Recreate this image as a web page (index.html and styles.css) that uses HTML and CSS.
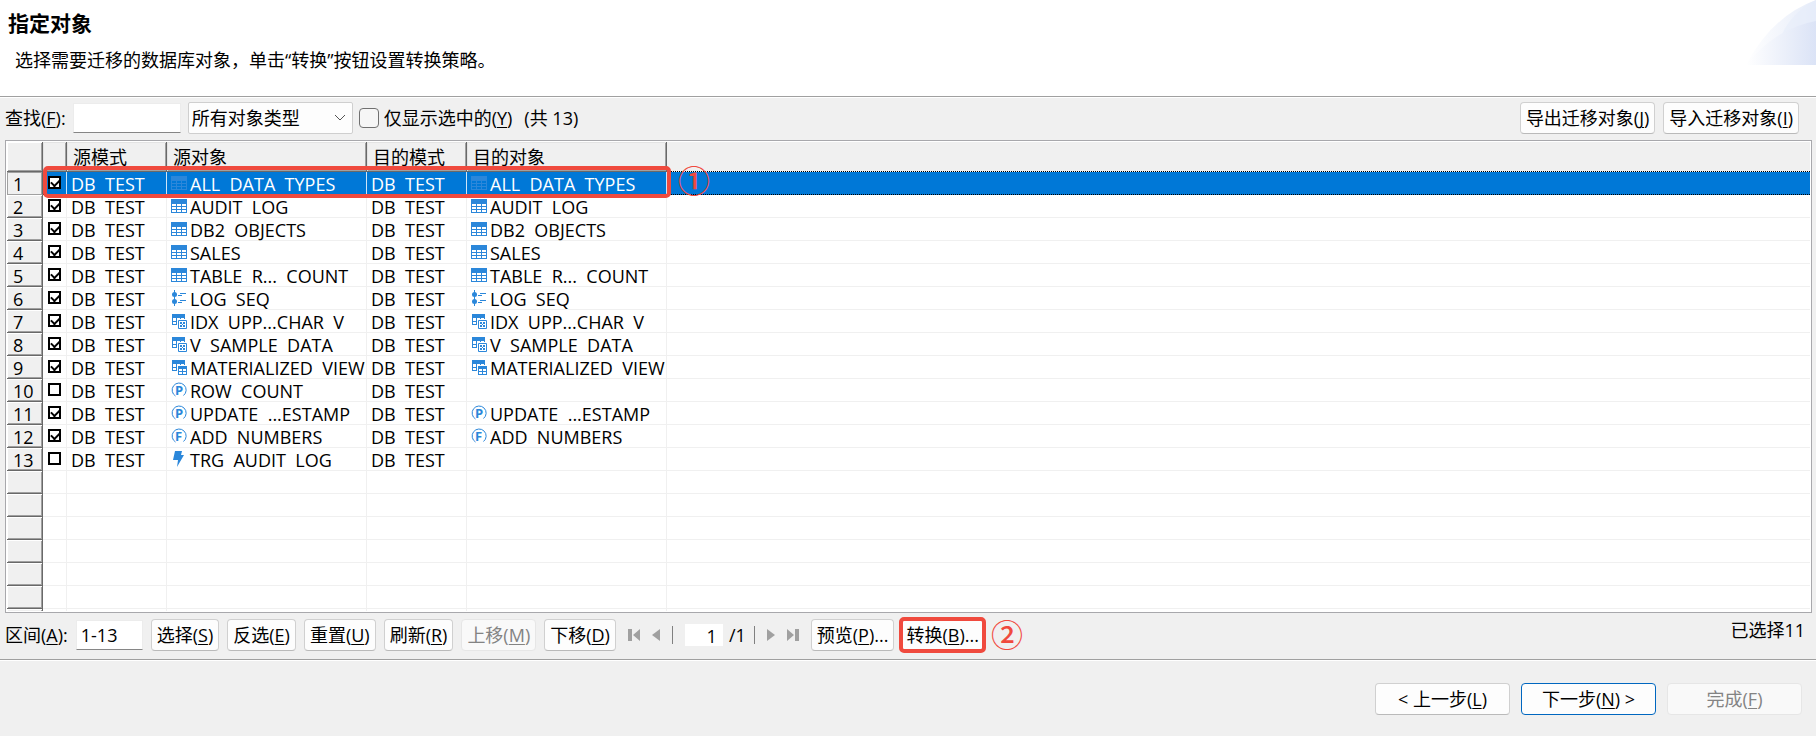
FILE: index.html
```html
<!DOCTYPE html>
<html lang="zh-CN">
<head>
    <meta charset="UTF-8">
    <meta name="viewport" content="width=device-width, initial-scale=1.0">
    <title>指定对象</title>
    <link rel="stylesheet" href="styles.css">
</head>
<body>
    <!-- icon shapes shared by the rows -->
    <svg class="sprite" width="0" height="0" aria-hidden="true">
        <symbol id="i-table" viewBox="0 0 16 16">
            <path fill="#2b87da" fill-rule="evenodd" d="M0 1h16v14H0zM1 6v2h4V6zM6 6v2h4V6zM11 6v2h4V6zM1 9v2h4V9zM6 9v2h4V9zM11 9v2h4V9zM1 12v2h4v-2zM6 12v2h4v-2zM11 12v2h4v-2z"/>
        </symbol>
        <symbol id="i-seq" viewBox="0 0 16 16">
            <path stroke="#2b87da" d="M3.500 0v16M9 3.500h6M7 5.500h4M9 10.500h6M7 12.500h4" fill="none"/>
            <circle cx="3.500" cy="4.500" r="2.500" fill="#2b87da"/>
            <circle cx="3.500" cy="11.500" r="2.500" fill="#2b87da"/>
        </symbol>
        <symbol id="i-view" viewBox="0 0 16 16">
            <path fill="#2b87da" fill-rule="evenodd" d="M1 1h13v11H1zM2 5v3h3V5zM6 5v3h3V5zM10 5v3h3V5zM2 9v2h3V9zM6 9v2h3V9z"/>
            <path fill="#fff" d="M6 6h10v10H6z"/>
            <path fill="none" stroke="#2b87da" d="M7.500 7.500h8v8h-8z"/>
            <path fill="#2b87da" d="M9 9h2v2H9zM12 9h2v2h-2zM9 12h2v2H9zM12 12h2v2h-2zM11 11h1v1h-1z"/>
        </symbol>
        <symbol id="i-mview" viewBox="0 0 16 16">
            <path fill="#2b87da" fill-rule="evenodd" d="M1 1h13v11H1zM2 5v3h3V5zM6 5v3h3V5zM10 5v3h3V5zM2 9v2h3V9zM6 9v2h3V9z"/>
            <path fill="#fff" d="M6 6h10v10H6z"/>
            <path fill="#2b87da" fill-rule="evenodd" d="M7 7h9v9H7zM8 10v2h3v-2zM12 10v2h3v-2zM8 13v2h3v-2zM12 13v2h3v-2z"/>
        </symbol>
        <symbol id="i-proc" viewBox="0 0 16 16">
            <path fill="none" stroke="#2b87da" d="M4.500 14A7 7 0 1 1 12.500 13.500"/>
            <text x="4" y="13" class="glyph">P</text>
        </symbol>
        <symbol id="i-func" viewBox="0 0 16 16">
            <path fill="none" stroke="#2b87da" d="M4.500 14A7 7 0 1 1 12.500 13.500"/>
            <text x="4" y="13" class="glyph">F</text>
        </symbol>
        <symbol id="i-trig" viewBox="0 0 16 16">
            <path fill="#2b87da" d="M4 0h7l-1 4h3L6 16l1-7H2z"/>
        </symbol>
    </svg>

    <header class="banner">
        <h1>指定对象</h1>
        <p>选择需要迁移的数据库对象，单击“转换”按钮设置转换策略。</p>
        <svg class="banner-art" width="70" height="65" viewBox="0 0 70 65" aria-hidden="true">
            <defs>
                <linearGradient id="fadeA"><stop offset="0" stop-color="#fff"/><stop offset="1" stop-color="#e6ecf9"/></linearGradient>
                <linearGradient id="fadeB"><stop offset="0" stop-color="#fff"/><stop offset="1" stop-color="#dbe3f6"/></linearGradient>
            </defs>
            <path fill="url(#fadeA)" d="M0 65Q26 16 70 0V65z"/>
            <path fill="#e6edfa" fill-opacity=".6" d="M36 34Q48 10 70 0V22Q52 25 36 34z"/>
            <path fill="url(#fadeB)" d="M0 65Q30 28 70 21V65z"/>
        </svg>
    </header>

    <main class="content">
        <div class="toolbar">
            <label for="find">查找(<u>F</u>):</label>
            <input type="text" id="find" class="field find">
            <span class="select-wrap">
                <select id="type" aria-label="对象类型">
                    <option>所有对象类型</option>
                </select>
                <svg class="chevron" width="12" height="8" viewBox="0 0 12 8" aria-hidden="true"><path d="M1 1l5 5 5-5" fill="none" stroke="#555"/></svg>
            </span>
            <input type="checkbox" id="only" class="check">
            <label for="only" class="only">仅显示选中的(<u>Y</u>)</label>
            <span>(共 13)</span>
            <span class="spacer"></span>
            <button type="button">导出迁移对象(<u>J</u>)</button>
            <button type="button" class="last">导入迁移对象(<u>I</u>)</button>
        </div>

        <div class="grid">
            <div class="grid-clip">
            <table>
                <colgroup>
                    <col class="c-num"><col class="c-tick"><col class="c-schema"><col class="c-object"><col class="c-schema"><col class="c-object"><col>
                </colgroup>
                <thead>
                    <tr><th class="num"></th><th></th><th>源模式</th><th>源对象</th><th>目的模式</th><th>目的对象</th><th class="rest"></th></tr>
                </thead>
                <tbody>
                    <tr class="selected">
                        <th class="num"><div class="cell">1</div></th>
                        <td><input type="checkbox" class="tick" aria-label="1" checked></td>
                        <td><div class="cell">DB  TEST</div></td>
                        <td><div class="cell"><svg class="icon"><use href="#i-table"/></svg>ALL  DATA  TYPES</div></td>
                        <td><div class="cell">DB  TEST</div></td>
                        <td><div class="cell"><svg class="icon"><use href="#i-table"/></svg>ALL  DATA  TYPES</div></td>
                        <td></td>
                    </tr>
                    <tr>
                        <th class="num"><div class="cell">2</div></th>
                        <td><input type="checkbox" class="tick" aria-label="2" checked></td>
                        <td><div class="cell">DB  TEST</div></td>
                        <td><div class="cell"><svg class="icon"><use href="#i-table"/></svg>AUDIT  LOG</div></td>
                        <td><div class="cell">DB  TEST</div></td>
                        <td><div class="cell"><svg class="icon"><use href="#i-table"/></svg>AUDIT  LOG</div></td>
                        <td></td>
                    </tr>
                    <tr>
                        <th class="num"><div class="cell">3</div></th>
                        <td><input type="checkbox" class="tick" aria-label="3" checked></td>
                        <td><div class="cell">DB  TEST</div></td>
                        <td><div class="cell"><svg class="icon"><use href="#i-table"/></svg>DB2  OBJECTS</div></td>
                        <td><div class="cell">DB  TEST</div></td>
                        <td><div class="cell"><svg class="icon"><use href="#i-table"/></svg>DB2  OBJECTS</div></td>
                        <td></td>
                    </tr>
                    <tr>
                        <th class="num"><div class="cell">4</div></th>
                        <td><input type="checkbox" class="tick" aria-label="4" checked></td>
                        <td><div class="cell">DB  TEST</div></td>
                        <td><div class="cell"><svg class="icon"><use href="#i-table"/></svg>SALES</div></td>
                        <td><div class="cell">DB  TEST</div></td>
                        <td><div class="cell"><svg class="icon"><use href="#i-table"/></svg>SALES</div></td>
                        <td></td>
                    </tr>
                    <tr>
                        <th class="num"><div class="cell">5</div></th>
                        <td><input type="checkbox" class="tick" aria-label="5" checked></td>
                        <td><div class="cell">DB  TEST</div></td>
                        <td><div class="cell"><svg class="icon"><use href="#i-table"/></svg>TABLE  R...  COUNT</div></td>
                        <td><div class="cell">DB  TEST</div></td>
                        <td><div class="cell"><svg class="icon"><use href="#i-table"/></svg>TABLE  R...  COUNT</div></td>
                        <td></td>
                    </tr>
                    <tr>
                        <th class="num"><div class="cell">6</div></th>
                        <td><input type="checkbox" class="tick" aria-label="6" checked></td>
                        <td><div class="cell">DB  TEST</div></td>
                        <td><div class="cell"><svg class="icon"><use href="#i-seq"/></svg>LOG  SEQ</div></td>
                        <td><div class="cell">DB  TEST</div></td>
                        <td><div class="cell"><svg class="icon"><use href="#i-seq"/></svg>LOG  SEQ</div></td>
                        <td></td>
                    </tr>
                    <tr>
                        <th class="num"><div class="cell">7</div></th>
                        <td><input type="checkbox" class="tick" aria-label="7" checked></td>
                        <td><div class="cell">DB  TEST</div></td>
                        <td><div class="cell"><svg class="icon"><use href="#i-view"/></svg>IDX  UPP...CHAR  V</div></td>
                        <td><div class="cell">DB  TEST</div></td>
                        <td><div class="cell"><svg class="icon"><use href="#i-view"/></svg>IDX  UPP...CHAR  V</div></td>
                        <td></td>
                    </tr>
                    <tr>
                        <th class="num"><div class="cell">8</div></th>
                        <td><input type="checkbox" class="tick" aria-label="8" checked></td>
                        <td><div class="cell">DB  TEST</div></td>
                        <td><div class="cell"><svg class="icon"><use href="#i-view"/></svg>V  SAMPLE  DATA</div></td>
                        <td><div class="cell">DB  TEST</div></td>
                        <td><div class="cell"><svg class="icon"><use href="#i-view"/></svg>V  SAMPLE  DATA</div></td>
                        <td></td>
                    </tr>
                    <tr>
                        <th class="num"><div class="cell">9</div></th>
                        <td><input type="checkbox" class="tick" aria-label="9" checked></td>
                        <td><div class="cell">DB  TEST</div></td>
                        <td><div class="cell"><svg class="icon"><use href="#i-mview"/></svg>MATERIALIZED  VIEW</div></td>
                        <td><div class="cell">DB  TEST</div></td>
                        <td><div class="cell"><svg class="icon"><use href="#i-mview"/></svg>MATERIALIZED  VIEW</div></td>
                        <td></td>
                    </tr>
                    <tr>
                        <th class="num"><div class="cell">10</div></th>
                        <td><input type="checkbox" class="tick" aria-label="10"></td>
                        <td><div class="cell">DB  TEST</div></td>
                        <td><div class="cell"><svg class="icon"><use href="#i-proc"/></svg>ROW  COUNT</div></td>
                        <td><div class="cell">DB  TEST</div></td>
                        <td></td>
                        <td></td>
                    </tr>
                    <tr>
                        <th class="num"><div class="cell">11</div></th>
                        <td><input type="checkbox" class="tick" aria-label="11" checked></td>
                        <td><div class="cell">DB  TEST</div></td>
                        <td><div class="cell"><svg class="icon"><use href="#i-proc"/></svg>UPDATE  ...ESTAMP</div></td>
                        <td><div class="cell">DB  TEST</div></td>
                        <td><div class="cell"><svg class="icon"><use href="#i-proc"/></svg>UPDATE  ...ESTAMP</div></td>
                        <td></td>
                    </tr>
                    <tr>
                        <th class="num"><div class="cell">12</div></th>
                        <td><input type="checkbox" class="tick" aria-label="12" checked></td>
                        <td><div class="cell">DB  TEST</div></td>
                        <td><div class="cell"><svg class="icon"><use href="#i-func"/></svg>ADD  NUMBERS</div></td>
                        <td><div class="cell">DB  TEST</div></td>
                        <td><div class="cell"><svg class="icon"><use href="#i-func"/></svg>ADD  NUMBERS</div></td>
                        <td></td>
                    </tr>
                    <tr>
                        <th class="num"><div class="cell">13</div></th>
                        <td><input type="checkbox" class="tick" aria-label="13"></td>
                        <td><div class="cell">DB  TEST</div></td>
                        <td><div class="cell"><svg class="icon"><use href="#i-trig"/></svg>TRG  AUDIT  LOG</div></td>
                        <td><div class="cell">DB  TEST</div></td>
                        <td></td>
                        <td></td>
                    </tr>
                    <!-- empty rows down to the bottom edge -->
                    <tr><th class="num"></th><td></td><td></td><td></td><td></td><td></td><td></td></tr>
                    <tr><th class="num"></th><td></td><td></td><td></td><td></td><td></td><td></td></tr>
                    <tr><th class="num"></th><td></td><td></td><td></td><td></td><td></td><td></td></tr>
                    <tr><th class="num"></th><td></td><td></td><td></td><td></td><td></td><td></td></tr>
                    <tr><th class="num"></th><td></td><td></td><td></td><td></td><td></td><td></td></tr>
                    <tr><th class="num"></th><td></td><td></td><td></td><td></td><td></td><td></td></tr>
                    <tr><th class="num"></th><td></td><td></td><td></td><td></td><td></td><td></td></tr>
                </tbody>
            </table>
            </div>
            <div class="mark row-mark"></div>
            <span class="step row-step">①</span>
        </div>

        <div class="actions">
            <label for="range">区间(<u>A</u>):</label>
            <input type="text" id="range" class="field range" value="1-13">
            <button type="button">选择(<u>S</u>)</button>
            <button type="button">反选(<u>E</u>)</button>
            <button type="button">重置(<u>U</u>)</button>
            <button type="button">刷新(<u>R</u>)</button>
            <button type="button" disabled>上移(<u>M</u>)</button>
            <button type="button">下移(<u>D</u>)</button>
            <div class="pager">
                <button type="button" class="nav" aria-label="首页"><svg width="12" height="12"><path d="M0 0h4v12H0zM12 0v12L5 6z"/></svg></button>
                <button type="button" class="nav" aria-label="上一页"><svg width="8" height="12"><path d="M8 0v12L0 6z"/></svg></button>
                <span class="bar"></span>
                <input type="text" class="page" value="1" aria-label="页码">
                <span class="total">/1</span>
                <span class="bar"></span>
                <button type="button" class="nav" aria-label="下一页"><svg width="8" height="12"><path d="M0 0v12l8-6z"/></svg></button>
                <button type="button" class="nav" aria-label="末页"><svg width="12" height="12"><path d="M8 0h4v12H8zM0 0v12l7-6z"/></svg></button>
            </div>
            <button type="button">预览(<u>P</u>)...</button>
            <span class="marked"><button type="button">转换(<u>B</u>)...</button><span class="mark"></span></span>
            <span class="step">②</span>
            <span class="spacer"></span>
            <span class="count">已选择11</span>
        </div>
    </main>

    <footer class="wizard">
        <button type="button">&lt; 上一步(<u>L</u>)</button>
        <button type="button" class="primary">下一步(<u>N</u>) &gt;</button>
        <button type="button" disabled>完成(<u>F</u>)</button>
    </footer>
</body>
</html>
```
FILE: styles.css
```css
* {
    box-sizing: border-box;
}
body {
    display: flex;
    flex-direction: column;
    height: 100vh;
    margin: 0;
    background: #f0f0f0;
    color: #000;
    font: 18px/24px "Open Sans", "Noto Sans CJK SC", sans-serif;
    overflow: hidden;
    white-space: nowrap;
}
input, select, button {
    font: inherit;
    color: inherit;
}
u {
    text-underline-offset: 2px;
    text-decoration-thickness: 1px;
}
.sprite {
    display: none;
}
.glyph {
    font: bold 13px "Open Sans", sans-serif;
    fill: #2b87da;
}
.spacer {
    flex: 1;
}

/* Title area */
.banner {
    position: relative;
    height: 98px;
    padding: 10px 8px;
    background: #fff;
    border-bottom: 1px solid #fff;
    box-shadow: inset 0 -1px #a0a0a0;
}
.banner h1 {
    margin: 0;
    font-size: 21px;
    line-height: 26px;
}
.banner p {
    margin: 12px 0 0 7px;
}
.banner-art {
    position: absolute;
    top: 0;
    right: 0;
}

/* Buttons and fields */
button {
    height: 32px;
    padding: 0 5px;
    background: #fdfdfd;
    border: 1px solid #d0d0d0;
    border-bottom-color: #bababa;
    border-radius: 4px;
}
button:disabled {
    color: #838383;
    background: #f9f9f9;
    border-color: #e6e6e6;
}
.field {
    height: 30px;
    padding: 0 4px;
    background: #fff;
    border: 1px solid #ececec;
    border-bottom-color: #868686;
    outline: none;
}

.content {
    display: flex;
    flex-direction: column;
    flex: 1;
    min-height: 0;
}
.toolbar {
    display: flex;
    align-items: center;
    height: 42px;
    padding: 4px 17px 6px 5px;
}
.find {
    width: 108px;
    margin: 0 7px;
}
.select-wrap {
    position: relative;
}
.select-wrap select {
    display: block;
    width: 165px;
    height: 32px;
    padding: 0 3px;
    appearance: none;
    background: #fdfdfd;
    border: 1px solid #cfcfcf;
    border-radius: 2px;
}
.chevron {
    position: absolute;
    right: 7px;
    top: 12px;
    pointer-events: none;
}
.check {
    width: 20px;
    height: 20px;
    margin: 0 5px 0 6px;
    appearance: none;
    background: #f6f6f6;
    border: 1px solid #707070;
    border-radius: 4px;
}
.only {
    margin-right: 12px;
}
.last {
    margin-left: 8px;
}

/* Object grid */
.grid {
    position: relative;
    flex: 1;
    min-height: 0;
    margin: 0 4px 0 5px;
    padding: 1px;
    background: #fff;
    border: 1px solid #a8a8ac;
}
.grid-clip {
    height: 100%;
    overflow: hidden;
}
table {
    width: 100%;
    table-layout: fixed;
    border-spacing: 0;
}
.c-num {
    width: 36px;
}
.c-tick {
    width: 24px;
}
.c-schema {
    width: 100px;
}
.c-object {
    width: 200px;
}
th, td {
    height: 23px;
    padding: 0;
    text-align: left;
    font-weight: normal;
    vertical-align: top;
    border-right: 1px solid #f0f0f0;
    border-bottom: 1px solid #f0f0f0;
}
td:last-child {
    border-right: 0;
}
thead th {
    height: 30px;
    padding: 3px 0 0 6px;
    background: #f0f0f0;
    border-right-color: #696969;
    border-bottom-color: #696969;
    box-shadow: inset 1px 1px #e3e3e3, inset -1px -1px #a0a0a0;
}
thead .rest {
    border-right: 0;
    border-bottom: 1px dotted #000;
    box-shadow: none;
}
.num {
    background: #f0f0f0;
    border-right-color: #696969;
    border-bottom-color: #696969;
    box-shadow: inset 1px 1px #fff, inset -1px -1px #a0a0a0;
}
.cell {
    display: flex;
    height: 22px;
    padding-left: 4px;
    line-height: 24px;
    white-space: pre;
}
.num .cell {
    padding-left: 6px;
}
.icon {
    flex: none;
    width: 16px;
    height: 16px;
    margin: 3px 3px 0 0;
}
.tick {
    display: block;
    position: relative;
    width: 13px;
    height: 13px;
    margin: 4px 0 0 5px;
    appearance: none;
    background: #fff;
    border: 2px solid #000;
}
.tick:checked::after {
    content: "";
    position: absolute;
    left: 1px;
    top: 1px;
    width: 7px;
    height: 4px;
    border-left: 2px solid #000;
    border-bottom: 2px solid #000;
    transform: rotate(-45deg);
}
.selected td {
    background: #0078d7;
    color: #fff;
    border-right-color: #cfe4f7;
    border-bottom: 1px dotted #000;
}
.selected .num {
    border-bottom-color: #a0a0a0;
    box-shadow: inset 1px 1px #a0a0a0, inset -1px 0 #a0a0a0;
}

/* Red callouts */
.mark {
    position: absolute;
    border: 4px solid #f04a3e;
    border-radius: 5px;
    pointer-events: none;
}
.row-mark {
    left: 37px;
    top: 25px;
    width: 628px;
    height: 32px;
}
.step {
    margin-bottom: 4px;
    color: #f04a3e;
    font-family: "Noto Sans CJK SC", sans-serif;
    font-size: 32px;
    font-weight: 500;
    line-height: 32px;
}
.row-step {
    position: absolute;
    left: 672px;
    top: 22px;
}

/* Row under the grid */
.actions {
    display: flex;
    align-items: center;
    gap: 8px;
    height: 46px;
    padding: 6px 11px 8px 5px;
}
.range {
    width: 67px;
}
.pager {
    display: flex;
    align-items: center;
    gap: 12px;
    padding: 0 4px;
}
.nav {
    display: flex;
    height: 12px;
    padding: 0;
    background: none;
    border: 0;
    border-radius: 0;
}
.nav svg {
    fill: #a0a0a0;
}
.bar {
    width: 1px;
    height: 18px;
    background: #808080;
}
.page {
    width: 38px;
    height: 22px;
    padding: 2px 6px 0 0;
    border: 0;
    background: #fff;
    text-align: right;
}
.total {
    margin: 0 -4px 0 -6px;
}
.marked {
    position: relative;
}
.marked .mark {
    inset: -2px -3px;
}
.marked button {
    display: block;
    padding: 0 3px;
}
.count {
    margin-top: -10px;
}

/* Wizard buttons */
.wizard {
    display: flex;
    justify-content: flex-end;
    gap: 11px;
    padding: 23px 14px 21px;
    border-top: 1px solid #a0a0a0;
    box-shadow: inset 0 1px #fff;
}
.wizard button {
    width: 135px;
}
.wizard .primary {
    border-color: #0067c0;
}
```
